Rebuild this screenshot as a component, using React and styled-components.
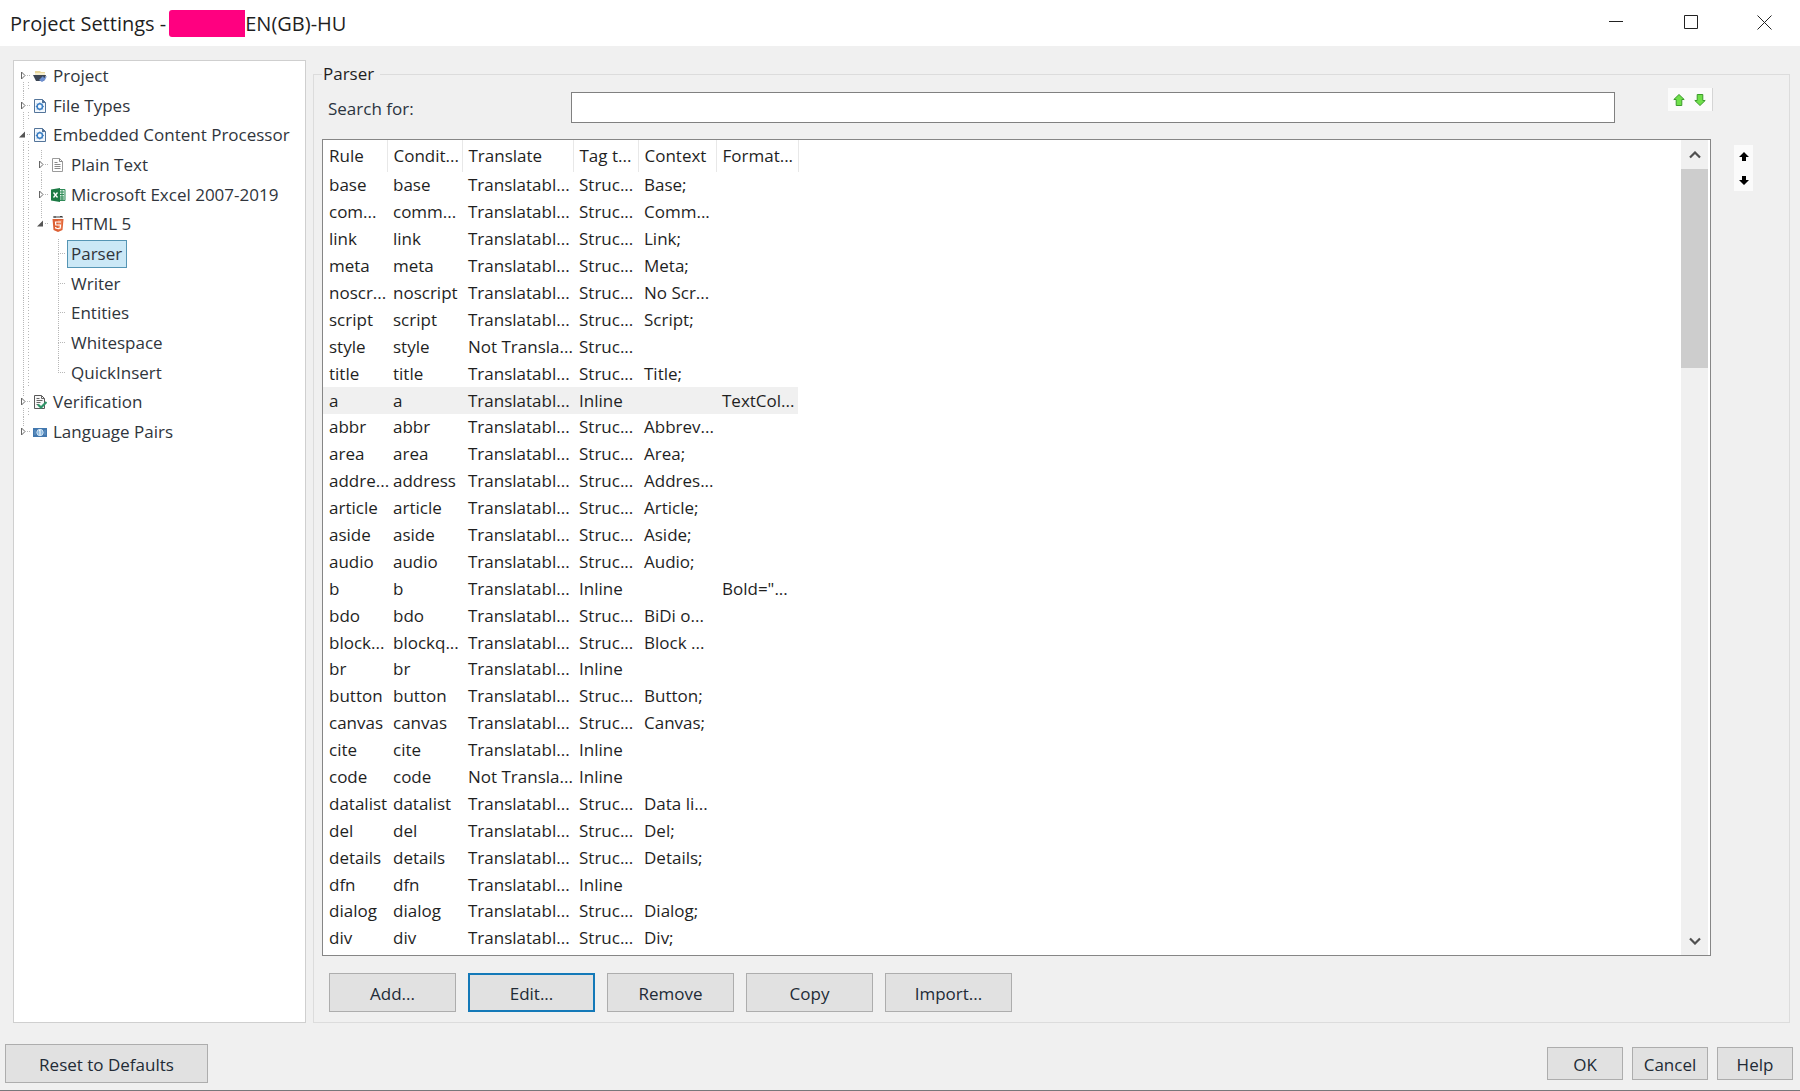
import React, { useState } from "react";
import styled, { createGlobalStyle } from "styled-components";

const GlobalStyle = createGlobalStyle`
  *, *::before, *::after { box-sizing: border-box; }
  body {
    margin: 0;
    background: #f0f0f0;
    color: #1f1f1f;
    font: 17px/24px "Open Sans", "Noto Sans", sans-serif;
  }
  button, input { font: inherit; color: inherit; margin: 0; }
`;

const Window = styled.div`
  display: flex;
  flex-direction: column;
  min-height: 100vh;
  border-bottom: 1px solid #77777b;
`;

const TitleBar = styled.header`
  display: flex;
  align-items: center;
  justify-content: space-between;
  height: 46px;
  padding-left: 10px;
  background: #fff;
`;

const Title = styled.h1`
  display: flex;
  align-items: center;
  gap: 3px;
  margin: 0;
  font-size: 20px;
  font-weight: 400;
  line-height: 27px;
`;

const ProjectName = styled.span`
  display: flex;
  align-items: center;
`;

const Redaction = styled.span`
  width: 76px;
  height: 27px;
  border-radius: 3px 0 0 3px;
  background: #ff0080;
`;

const WindowControls = styled.div`
  display: flex;
  height: 100%;
`;

const WindowButton = styled.button`
  display: grid;
  place-items: center;
  width: 75px;
  padding: 0 0 2px;
  border: 0;
  background: none;
  svg { display: block; }
  &:last-child { width: 72px; }
`;

const Content = styled.main`
  flex: 1;
  display: grid;
  grid-template-columns: 293px minmax(0, 1fr);
  gap: 7px;
  padding: 14px 10px 0 13px;
`;

const TreePanel = styled.nav`
  border: 1px solid #cfcfcf;
  background: #fff;
  color: #30353c;
`;

const TreeList = styled.ul`
  display: flex;
  flex-direction: column;
  height: 386px;
  margin: 0;
  padding: 0;
  list-style: none;
`;

const TreeItem = styled.li`
  flex: 1;
  display: flex;
  align-items: center;
  min-height: 0;
`;

const Gutter = styled.svg`
  flex: none;
  width: ${(p) => p.$width}px;
  height: 30px;
  overflow: visible;
`;

const TreeLabel = styled.button`
  display: flex;
  align-items: center;
  height: 28px;
  padding: 0 4px 0 3px;
  border: 1px solid ${(p) => (p.$selected ? "#5595b4" : "transparent")};
  background: ${(p) => (p.$selected ? "#cbe8f6" : "transparent")};
  white-space: nowrap;
`;

const IconSlot = styled.span`
  display: flex;
  width: 16px;
`;

const Group = styled.fieldset`
  display: flex;
  flex-direction: column;
  min-width: 0;
  margin: 2px 0 0;
  padding: 0 36px 10px 8px;
  border: 1px solid #dcdcdc;
`;

const GroupTitle = styled.legend`
  padding: 0 6px 0 1px;
`;

const SearchRow = styled.div`
  display: flex;
  align-items: flex-start;
  height: 53px;
  padding: 6px 40px 0 6px;
`;

const SearchLabel = styled.label`
  width: 243px;
  padding-top: 5px;
  color: #2b3440;
`;

const SearchInput = styled.input`
  flex: 1;
  height: 31px;
  margin-right: 53px;
  padding: 0 6px;
  border: 1px solid #808080;
  background: #fff;
  outline: 0;
`;

const FindButtons = styled.div`
  display: flex;
  width: 45px;
  height: 23px;
  margin-top: -4px;
  background: #fbfbfb;
  border-right: 1px solid #d5d5d5;
`;

const ArrowButton = styled.button`
  display: grid;
  place-items: center;
  width: 21px;
  height: 23px;
  padding: 0;
  border: 0;
  background: none;
`;

const ListRow = styled.div`
  flex: 1;
  display: flex;
  gap: 23px;
  align-items: stretch;
`;

const ListPanel = styled.div`
  flex: 1;
  display: flex;
  justify-content: space-between;
  padding-right: 2px;
  border: 1px solid #868686;
  background: #fff;
`;

const RuleTable = styled.table`
  align-self: flex-start;
  width: 475px;
  height: 812px;
  border-collapse: collapse;
  table-layout: fixed;
`;

const Column = styled.col`
  width: ${(p) => p.$width}px;
`;

const HeaderCell = styled.th`
  height: 32px;
  padding: 0 0 0 6px;
  border-right: 1px solid #e8e8e8;
  font-weight: 400;
  text-align: left;
  white-space: nowrap;
`;

const Row = styled.tr`
  background: ${(p) => (p.$selected ? "#f0f0f0" : "transparent")};
`;

const Cell = styled.td`
  height: 26px;
  padding: 0 0 0 6px;
  line-height: 24px;
  white-space: nowrap;
`;

const ScrollTrack = styled.div`
  display: flex;
  flex-direction: column;
  width: 27px;
  background: #f0f0f0;
`;

const ScrollButton = styled.button`
  display: grid;
  place-items: center;
  height: 29px;
  padding: 0;
  border: 0;
  background: none;
`;

const ScrollArea = styled.div`
  flex: 1;
`;

const ScrollThumb = styled.div`
  height: 199px;
  background: #cdcdcd;
`;

const OrderButtons = styled.div`
  display: flex;
  flex-direction: column;
  width: 19px;
  height: 46px;
  margin-top: 6px;
  background: #fbfbfb;
`;

const OrderButton = styled(ArrowButton)`
  width: 19px;
`;

const Actions = styled.div`
  display: flex;
  gap: 12px;
  padding: 17px 0 0 7px;
`;

const PushButton = styled.button`
  width: ${(p) => p.$width}px;
  height: ${(p) => p.$height}px;
  padding: 2px 0 0;
  border: ${(p) => (p.$focused ? "2px solid #1479b8" : "1px solid #adadad")};
  background: #e1e1e1;
  color: #222b36;
`;

const Footer = styled.footer`
  display: flex;
  align-items: center;
  justify-content: space-between;
  padding: 21px 7px 7px 5px;
`;

const DialogButtons = styled.div`
  display: flex;
  gap: 9px;
`;

const ProjectIcon = () => (
  <svg width="14" height="14" viewBox="0 0 14 14">
    <path d="M2 2h5l1 1h4v4H2z" fill="#e8d69b" />
    <path d="M2 4h10v2H2z" fill="#f5edcd" />
    <path d="M0 6h13l-2 6H3z" fill="#3d4654" />
    <path d="M6 11l4-4 1 2 3-2-2 4-3 2z" fill="#6d8fd0" />
  </svg>
);

const FileGearIcon = () => (
  <svg width="14" height="14" viewBox="0 0 14 14" fill="none">
    <path d="M1.5.5h8l3 3v10h-11z" fill="#f3f8fd" stroke="#54759a" />
    <path d="M9 0v4h4" fill="#54759a" />
    <circle cx="6.8" cy="7.5" r="2.7" stroke="#3c7fc4" strokeWidth="1.6" />
    <path d="M6.8 3.5v1.5m0 5v1.5m-4-4h1.5m5 0h1.5M4 4.700l1 1m3.600 3.600l1 1m0-5.600l-1 1M5 9.300l-1 1" stroke="#3c7fc4" />
  </svg>
);

const TextFileIcon = () => (
  <svg width="14" height="14" viewBox="0 0 14 14" fill="none">
    <path d="M1.500.5h7l3 3v10h-10z" fill="#fff" stroke="#9b9b9b" />
    <path d="M8.500.5v3h3M3.500 4.500h3M3.500 6.500h6M3.500 8.500h6M3.500 10.500h6" stroke="#8a8a8a" />
  </svg>
);

const ExcelIcon = () => (
  <svg width="15" height="14" viewBox="0 0 15 14" fill="none">
    <path d="M8 1.500h6v11H8z" fill="#dcefe3" stroke="#2f8a57" />
    <path d="M9 4h4M9 6.500h4M9 9h4M9 11h4M11 2v10" stroke="#2f8a57" />
    <path d="M0 1.500L9 0v14l-9-1.500z" fill="#1c7a44" />
    <path d="M2.500 4.500l4 5m0-5l-4 5" stroke="#fff" strokeWidth="1.300" />
  </svg>
);

const Html5Icon = () => (
  <svg width="14" height="16" viewBox="0 0 14 16" fill="none">
    <path d="M3 0v2M5 0v2M3 1h2M7 0v2M9 2V0l1 1 1-1v2" stroke="#3c3c3c" />
    <path d="M1.500 3h11l-1 11L7 16l-4.500-2z" fill="#dc5f33" />
    <path d="M7 4h4.500l-.8 9L7 14.500z" fill="#ec7a4d" />
    <path d="M10 6H4.500l.3 3h4.700l-.3 3L7 12.700 4.700 12v-1" stroke="#fff" strokeWidth="1.200" />
  </svg>
);

const VerificationIcon = () => (
  <svg width="14" height="14" viewBox="0 0 14 14" fill="none">
    <path d="M1.500.5h7l3 3v10h-10z" fill="#f7f7f7" stroke="#585858" />
    <path d="M8.500.5v3h3M3.500 3.500h3M3.500 5.500h6M3.500 7.500h4M3.500 9.500h2" stroke="#666" />
    <path d="M5 9.500l3 3 5.500-5.500" stroke="#2f9468" strokeWidth="2.200" />
  </svg>
);

const LanguageIcon = () => (
  <svg width="14" height="14" viewBox="0 0 14 14" fill="none">
    <path d="M0 3h14v9H0z" fill="#4277ae" />
    <circle cx="7" cy="7.500" r="3.200" fill="#8db9df" stroke="#d4e6f4" />
    <path d="M6 6l1-1v5" stroke="#fff" />
    <path d="M2 5v5M12 5v5" stroke="#6b9cc9" />
  </svg>
);

const nodes = [
  { level: 0, label: "Project", Icon: ProjectIcon, arrow: "closed" },
  { level: 0, label: "File Types", Icon: FileGearIcon, arrow: "closed" },
  { level: 0, label: "Embedded Content Processor", Icon: FileGearIcon, arrow: "open" },
  { level: 1, label: "Plain Text", Icon: TextFileIcon, arrow: "closed" },
  { level: 1, label: "Microsoft Excel 2007-2019", Icon: ExcelIcon, arrow: "closed" },
  { level: 1, label: "HTML 5", Icon: Html5Icon, arrow: "open", last: true },
  { level: 2, label: "Parser" },
  { level: 2, label: "Writer" },
  { level: 2, label: "Entities" },
  { level: 2, label: "Whitespace" },
  { level: 2, label: "QuickInsert", last: true },
  { level: 0, label: "Verification", Icon: VerificationIcon, arrow: "closed" },
  { level: 0, label: "Language Pairs", Icon: LanguageIcon, arrow: "closed", last: true },
];

const gutterWidths = [19, 37, 53];
const stems = [9, 27, 44];

function TreeGutter({ level, arrow, last, first }) {
  const x = stems[level];
  const end = level === 2 ? 51 : gutterWidths[level] - 2;
  return (
    <Gutter $width={gutterWidths[level]} aria-hidden="true">
      <g stroke="#b8b8b8" strokeDasharray="1 1">
        {level > 0 && <line x1="9.500" x2="9.500" y1="0" y2="100%" />}
        {level > 0 && <line x1="14.500" x2="14.500" y1="0" y2="100%" strokeDasharray="1 2" />}
        {!first && <line x1={x + 0.5} x2={x + 0.5} y1="0" y2={arrow ? "30%" : "50%"} />}
        {!last && <line x1={x + 0.5} x2={x + 0.5} y1={arrow ? "70%" : "50%"} y2="100%" />}
        {level === 0 && !last && <line x1="14.500" x2="14.500" y1="70%" y2="100%" strokeDasharray="1 2" />}
        <line x1={level === 2 ? x : x + 4} x2={end} y1="14.500" y2="14.500" />
      </g>
      {arrow && (
        <svg x={x - 3} y="50%" overflow="visible">
          {arrow === "closed" ? (
            <path d="M1.500-4l3.500 3.500L1.500 3z" fill="#fff" stroke="#666" />
          ) : (
            <path d="M5-3.500v6H-1z" fill="#555" />
          )}
        </svg>
      )}
    </Gutter>
  );
}

const columns = [
  ["Rule", 64],
  ["Condit...", 75],
  ["Translate", 111],
  ["Tag t...", 65],
  ["Context", 78],
  ["Format...", 82],
];

const T = "Translatabl...";
const N = "Not Transla...";
const S = "Struc...";
const I = "Inline";

const rules = [
  ["base", "base", T, S, "Base;", ""],
  ["com...", "comm...", T, S, "Comm...", ""],
  ["link", "link", T, S, "Link;", ""],
  ["meta", "meta", T, S, "Meta;", ""],
  ["noscr...", "noscript", T, S, "No Scr...", ""],
  ["script", "script", T, S, "Script;", ""],
  ["style", "style", N, S, "", ""],
  ["title", "title", T, S, "Title;", ""],
  ["a", "a", T, I, "", "TextCol..."],
  ["abbr", "abbr", T, S, "Abbrev...", ""],
  ["area", "area", T, S, "Area;", ""],
  ["addre...", "address", T, S, "Addres...", ""],
  ["article", "article", T, S, "Article;", ""],
  ["aside", "aside", T, S, "Aside;", ""],
  ["audio", "audio", T, S, "Audio;", ""],
  ["b", "b", T, I, "", 'Bold="...'],
  ["bdo", "bdo", T, S, "BiDi o...", ""],
  ["block...", "blockq...", T, S, "Block ...", ""],
  ["br", "br", T, I, "", ""],
  ["button", "button", T, S, "Button;", ""],
  ["canvas", "canvas", T, S, "Canvas;", ""],
  ["cite", "cite", T, I, "", ""],
  ["code", "code", N, I, "", ""],
  ["datalist", "datalist", T, S, "Data li...", ""],
  ["del", "del", T, S, "Del;", ""],
  ["details", "details", T, S, "Details;", ""],
  ["dfn", "dfn", T, I, "", ""],
  ["dialog", "dialog", T, S, "Dialog;", ""],
  ["div", "div", T, S, "Div;", ""],
];

const GreenArrow = ({ down }) => (
  <svg width="12" height="12" viewBox="0 0 12 12">
    <path
      d={down ? "M6 11.500L.8 6.500h2.400v-6h5.600v6h2.400z" : "M6 .5l5.200 5H8.800v6H3.200v-6H.8z"}
      fill="#6fe04a"
      stroke="#3c9a2c"
    />
  </svg>
);

const BlackArrow = ({ down }) => (
  <svg width="10" height="10" viewBox="0 0 10 10">
    <path d={down ? "M5 10L0 5h3V1h4v4h3z" : "M5 0l5 5H7v4H3V5H0z"} fill="#000" />
  </svg>
);

const Chevron = ({ down }) => (
  <svg width="12" height="8" viewBox="0 0 12 8" fill="none">
    <path d={down ? "M1 1.500l5 5 5-5" : "M1 6.500l5-5 5 5"} stroke="#505050" strokeWidth="2.200" />
  </svg>
);

export default function App() {
  const [page, setPage] = useState("Parser");
  const [selectedRule, setSelectedRule] = useState("a");
  const [query, setQuery] = useState("");

  return (
    <>
      <GlobalStyle />
      <Window>
        <TitleBar>
          <Title>
            <span>Project Settings -</span>
            <ProjectName>
              <Redaction />
              EN(GB)-HU
            </ProjectName>
          </Title>
          <WindowControls>
            <WindowButton aria-label="Minimize">
              <svg width="14" height="14"><path d="M0 6.500h14" stroke="#222" /></svg>
            </WindowButton>
            <WindowButton aria-label="Maximize">
              <svg width="14" height="14"><path d="M.5.5h13v13H.5z" fill="none" stroke="#222" /></svg>
            </WindowButton>
            <WindowButton aria-label="Close">
              <svg width="15" height="15"><path d="M.5.5l14 14m0-14l-14 14" stroke="#222" /></svg>
            </WindowButton>
          </WindowControls>
        </TitleBar>

        <Content>
          <TreePanel aria-label="Settings pages">
            <TreeList>
              {nodes.map(({ Icon, ...node }, i) => (
                <TreeItem key={node.label}>
                  <TreeGutter {...node} first={i === 0} />
                  {Icon && <IconSlot><Icon /></IconSlot>}
                  <TreeLabel
                    type="button"
                    $selected={page === node.label}
                    onClick={() => setPage(node.label)}
                  >
                    {node.label}
                  </TreeLabel>
                </TreeItem>
              ))}
            </TreeList>
          </TreePanel>

          <Group>
            <GroupTitle>Parser</GroupTitle>
            <SearchRow>
              <SearchLabel htmlFor="search">Search for:</SearchLabel>
              <SearchInput id="search" value={query} onChange={(e) => setQuery(e.target.value)} />
              <FindButtons>
                <ArrowButton aria-label="Find previous"><GreenArrow /></ArrowButton>
                <ArrowButton aria-label="Find next"><GreenArrow down /></ArrowButton>
              </FindButtons>
            </SearchRow>
            <ListRow>
              <ListPanel>
                <RuleTable>
                  <colgroup>
                    {columns.map(([name, width]) => <Column key={name} $width={width} />)}
                  </colgroup>
                  <thead>
                    <tr>{columns.map(([name]) => <HeaderCell key={name} scope="col">{name}</HeaderCell>)}</tr>
                  </thead>
                  <tbody>
                    {rules.map((rule) => (
                      <Row
                        key={rule[0]}
                        $selected={selectedRule === rule[0]}
                        onClick={() => setSelectedRule(rule[0])}
                      >
                        {rule.map((value, i) => <Cell key={i}>{value}</Cell>)}
                      </Row>
                    ))}
                  </tbody>
                </RuleTable>
                <ScrollTrack>
                  <ScrollButton aria-label="Scroll up"><Chevron /></ScrollButton>
                  <ScrollArea><ScrollThumb /></ScrollArea>
                  <ScrollButton aria-label="Scroll down"><Chevron down /></ScrollButton>
                </ScrollTrack>
              </ListPanel>
              <OrderButtons>
                <OrderButton aria-label="Move up"><BlackArrow /></OrderButton>
                <OrderButton aria-label="Move down"><BlackArrow down /></OrderButton>
              </OrderButtons>
            </ListRow>
            <Actions>
              <PushButton $width={127} $height={39}>Add...</PushButton>
              <PushButton $width={127} $height={39} $focused>Edit...</PushButton>
              <PushButton $width={127} $height={39}>Remove</PushButton>
              <PushButton $width={127} $height={39}>Copy</PushButton>
              <PushButton $width={127} $height={39}>Import...</PushButton>
            </Actions>
          </Group>
        </Content>

        <Footer>
          <PushButton $width={203} $height={39}>Reset to Defaults</PushButton>
          <DialogButtons>
            <PushButton $width={76} $height={33}>OK</PushButton>
            <PushButton $width={76} $height={33}>Cancel</PushButton>
            <PushButton $width={76} $height={33}>Help</PushButton>
          </DialogButtons>
        </Footer>
      </Window>
    </>
  );
}
